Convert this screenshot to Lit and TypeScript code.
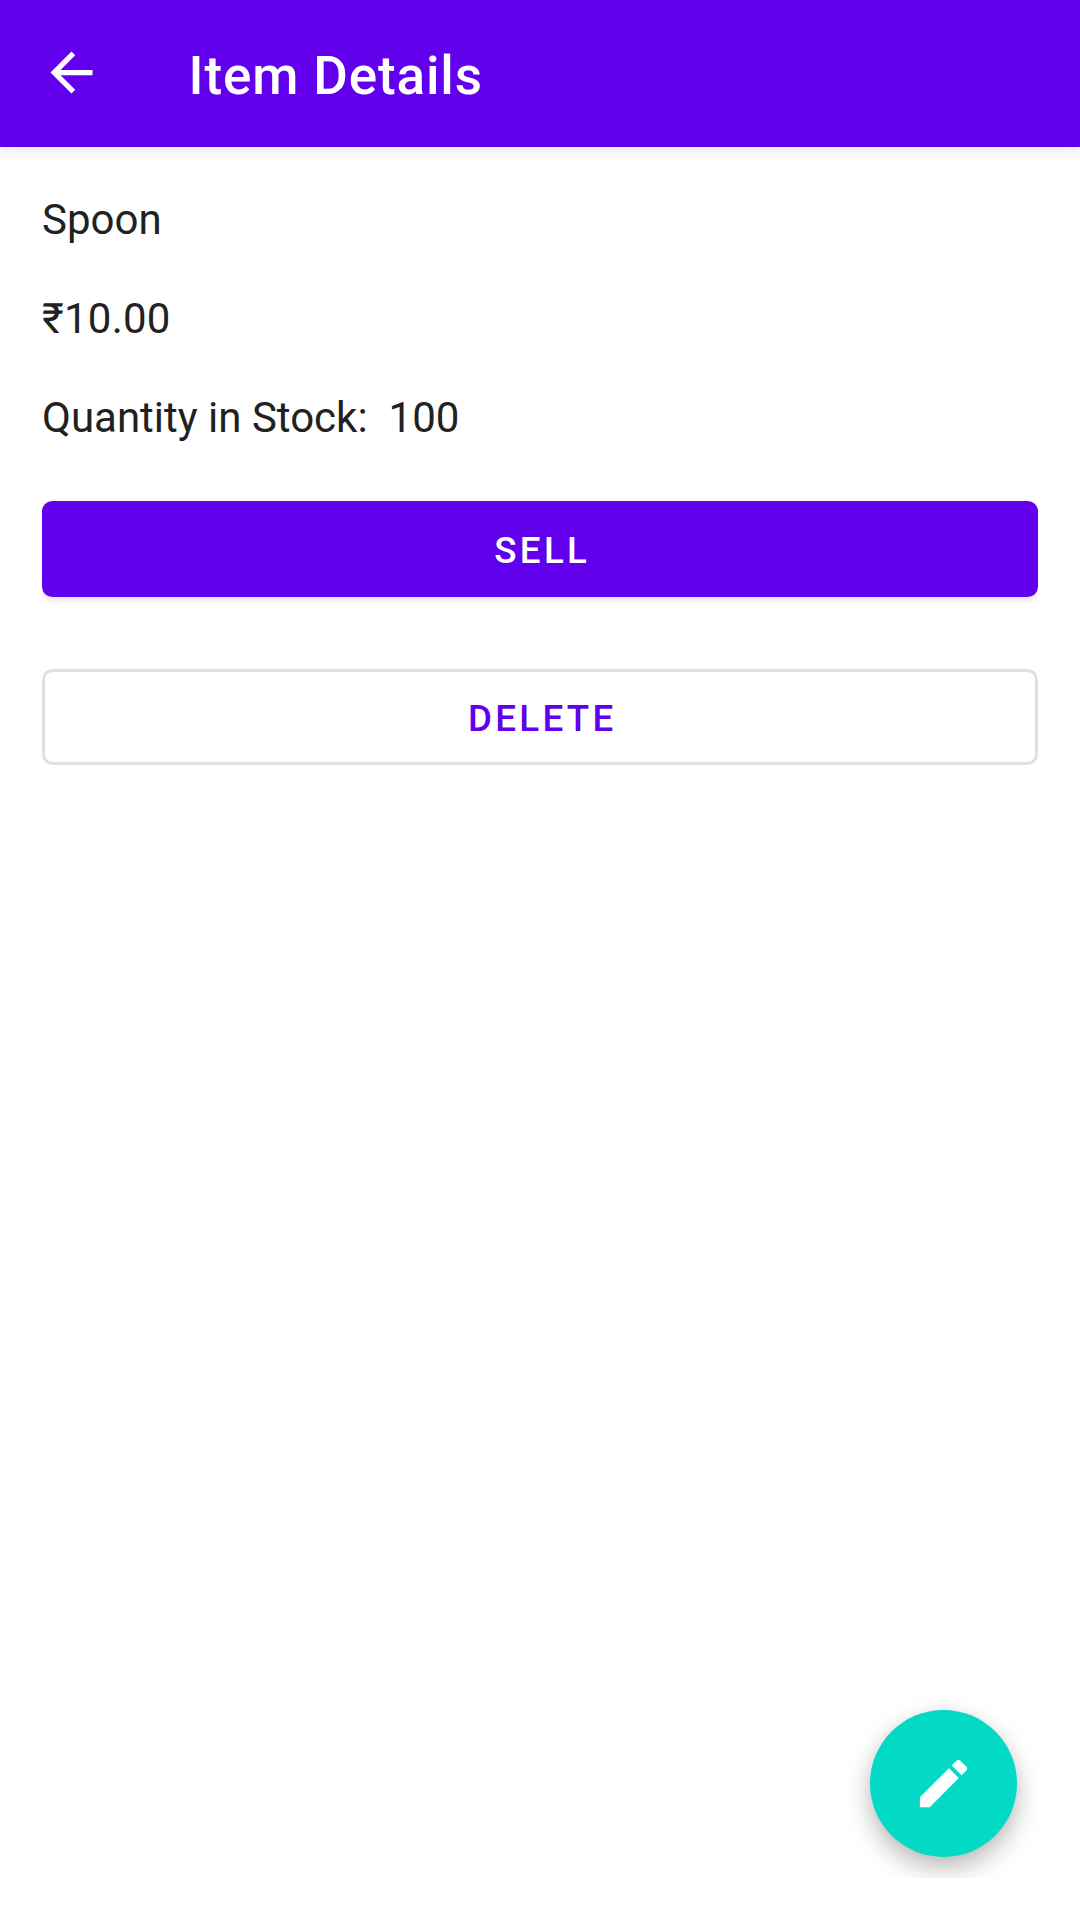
import { LitElement, html, css } from "lit";
import { customElement, state } from "lit/decorators.js";

interface Item {
  name: string;
  price: string;
  quantity: number;
}

@customElement("app-root")
export class AppRoot extends LitElement {
  @state() private item: Item = { name: "Spoon", price: "₹10.00", quantity: 100 };

  static styles = css`
    :host {
      display: flex;
      flex-direction: column;
      box-sizing: border-box;
      height: 100vh;
      overflow: hidden;
      background: #fff;
      color: #212121;
      font-family: Roboto, "Noto Sans", sans-serif;
    }
    .bar {
      display: flex;
      align-items: center;
      flex: none;
      box-sizing: border-box;
      height: 147px;
      padding-left: 39.5px;
      gap: 86px;
      background: #6200ee;
      color: #fff;
      box-shadow: 0 3px 14px rgba(0, 0, 0, 0.11);
    }
    .back {
      display: flex;
      padding: 0 0 1.5px;
      border: 0;
      background: none;
      color: inherit;
    }
    .icon {
      display: block;
      width: 63px;
      height: 63px;
      fill: currentColor;
    }
    .title {
      margin: 0;
      padding-top: 5px;
      font-size: 53px;
      line-height: 62px;
      font-weight: 500;
      letter-spacing: 0.0165em;
    }
    .content {
      position: relative;
      display: flex;
      flex-direction: column;
      flex: 1;
      margin-bottom: 42px;
      padding: 44px 42px 0;
      overflow: hidden;
      clip-path: inset(0 42px 0 42px);
    }
    .details {
      display: flex;
      flex-direction: column;
      gap: 42px;
      font-size: 42px;
      line-height: 57px;
    }
    .row {
      display: flex;
      gap: 21px;
    }
    .price {
      letter-spacing: 0.006em;
    }
    .actions {
      display: flex;
      flex-direction: column;
      gap: 72px;
      padding-top: 55px;
    }
    .button {
      box-sizing: border-box;
      height: 96px;
      padding: 2px 0 0 4.5px;
      border: 0;
      border-radius: 10.5px;
      font: 500 36.75px/43px Roboto, sans-serif;
      letter-spacing: 0.0893em;
      text-align: center;
    }
    .filled {
      background: #6200ee;
      color: #fff;
      box-shadow: 0 3px 6px rgba(0, 0, 0, 0.12);
    }
    .outlined {
      border: 3px solid #e0e0e0;
      background: #fff;
      color: #6200ee;
    }
    .fab {
      position: absolute;
      right: 63px;
      bottom: 21px;
      display: flex;
      align-items: center;
      justify-content: center;
      width: 147px;
      height: 147px;
      padding: 0;
      border: 0;
      border-radius: 50%;
      background: #03dac5;
      color: #fff;
      box-shadow: 0 11px 26px rgba(0, 0, 0, 0.27), 0 0 10px rgba(0, 0, 0, 0.04);
    }
  `;

  render() {
    const { name, price, quantity } = this.item;
    return html`
      <header class="bar">
        <button class="back" aria-label="Back">
          <svg class="icon" viewBox="0 0 24 24">
            <path d="M20 11H7.83l5.59-5.59L12 4l-8 8 8 8 1.41-1.41L7.83 13H20v-2z" />
          </svg>
        </button>
        <h1 class="title">Item Details</h1>
      </header>
      <main class="content">
        <section class="details">
          <div class="row">${name}</div>
          <div class="row price">${price}</div>
          <div class="row"><span>Quantity in Stock:</span><span>${quantity}</span></div>
        </section>
        <div class="actions">
          <button class="button filled">SELL</button>
          <button class="button outlined">DELETE</button>
        </div>
        <button class="fab" aria-label="Edit">
          <svg class="icon" viewBox="0 0 24 24">
            <path
              d="M3 17.25V21h3.75L17.81 9.94l-3.75-3.75L3 17.25zM20.71 7.04c.39-.39.39-1.02 0-1.41l-2.34-2.34c-.39-.39-1.02-.39-1.41 0l-1.83 1.83 3.75 3.75 1.83-1.83z"
            />
          </svg>
        </button>
      </main>
    `;
  }
}
